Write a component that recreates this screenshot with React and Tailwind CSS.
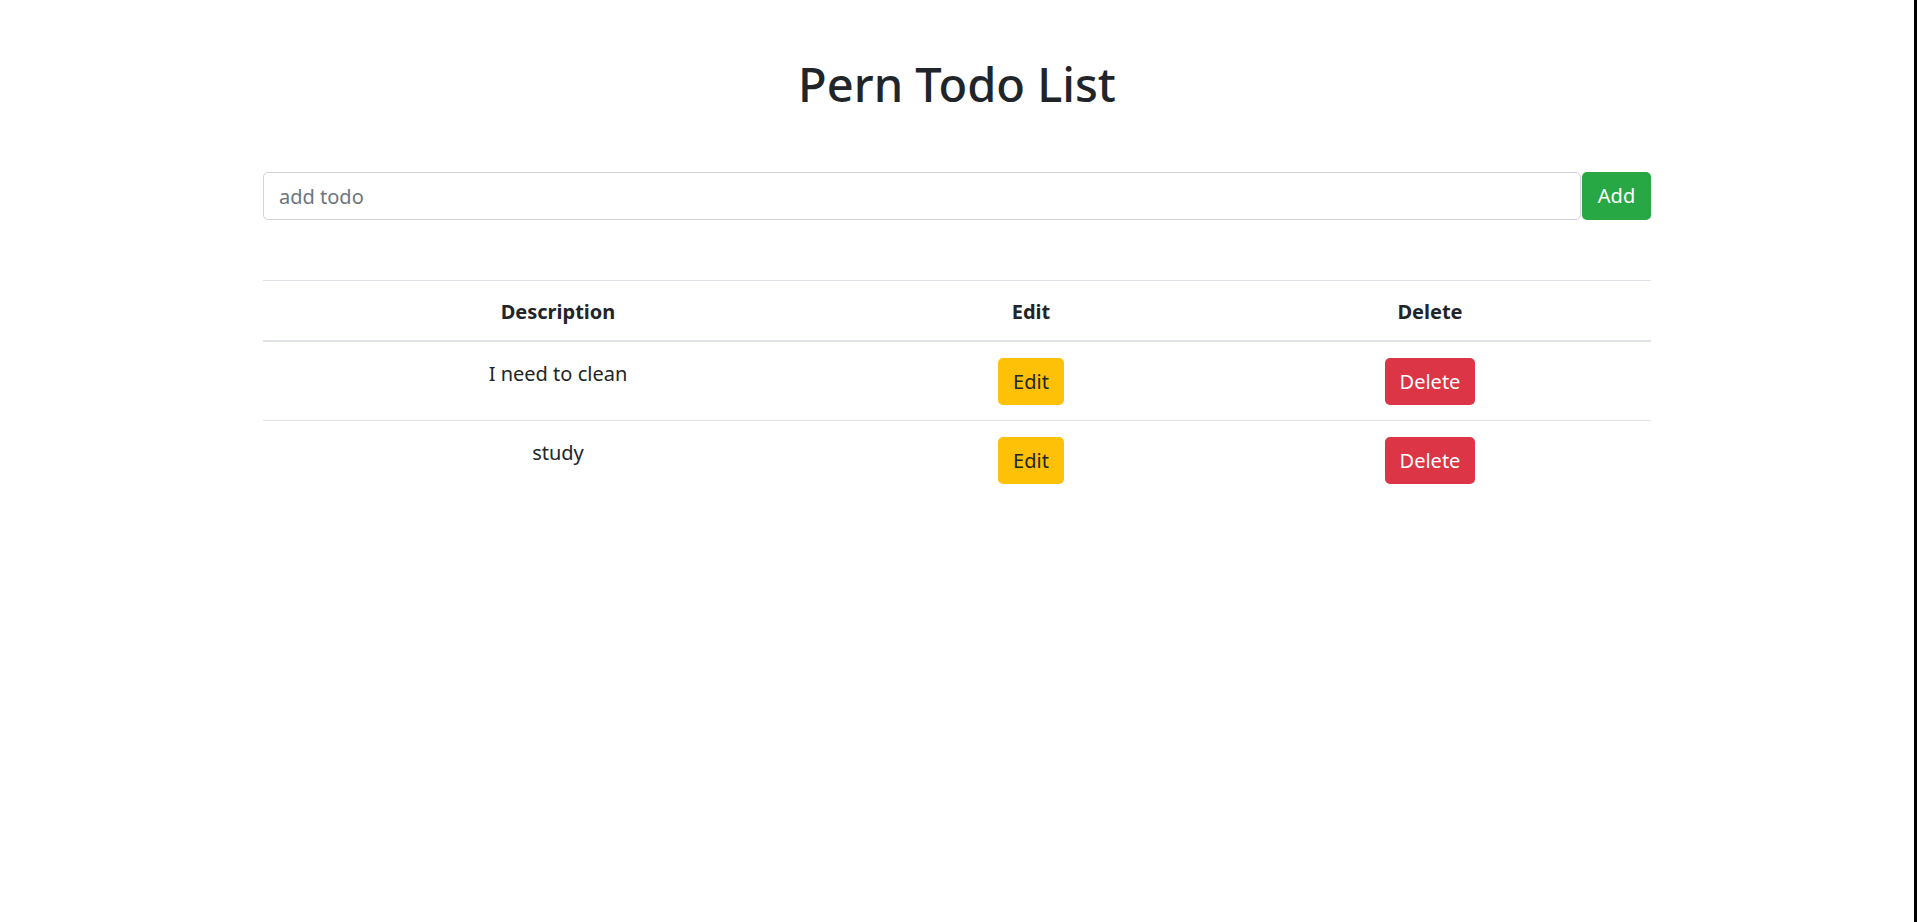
import React from "react";

const todos = [
  { id: 1, description: "I need to clean" },
  { id: 2, description: "study" },
];

export default function App() {
  return (
    <div
      className="flex min-h-screen w-full bg-white text-[#212529]"
      style={{ fontFamily: '"Noto Sans", "Open Sans", sans-serif' }}
    >
      <div className="flex-1">
        <div className="mx-auto w-[1388px]">
          <h1 className="pt-[54px] text-center text-[47px] font-medium leading-[60px] text-[#212529]">
            Pern Todo List
          </h1>
          <form className="mt-[58px] flex" onSubmit={(e) => e.preventDefault()}>
            <input
              type="text"
              placeholder="add todo"
              className="h-[48px] flex-1 rounded-[5px] border border-[#ced4da] bg-white px-[15px] text-[20px] text-[#495057] outline-none placeholder:text-[#6c757d]"
            />
            <button className="ml-px h-[48px] w-[69px] rounded-[5px] bg-[#28a745] text-[20px] text-white">
              Add
            </button>
          </form>
          <table className="mt-[60px] w-full table-fixed border-collapse text-center text-[20px]">
            <colgroup>
              <col className="w-[590px]" />
              <col className="w-[356px]" />
              <col className="w-[442px]" />
            </colgroup>
            <thead>
              <tr>
                <th className="border-t border-b-2 border-[#dee2e6] pt-[16px] pb-[13px] font-bold leading-[30px]">
                  Description
                </th>
                <th className="border-t border-b-2 border-[#dee2e6] pt-[16px] pb-[13px] font-bold leading-[30px]">
                  Edit
                </th>
                <th className="border-t border-b-2 border-[#dee2e6] pt-[16px] pb-[13px] font-bold leading-[30px]">
                  Delete
                </th>
              </tr>
            </thead>
            <tbody>
              {todos.map((t) => (
                <tr key={t.id}>
                  <td className="border-t border-[#dee2e6] px-[15px] pt-[17px] pb-[15px] align-top leading-[30px]">
                    {t.description}
                  </td>
                  <td className="border-t border-[#dee2e6] px-[15px] pt-[16px] pb-[15px] align-top">
                    <button className="h-[47px] rounded-[5px] bg-[#ffc107] px-[15px] text-[20px] leading-[30px] text-[#212529]">
                      Edit
                    </button>
                  </td>
                  <td className="border-t border-[#dee2e6] px-[15px] pt-[16px] pb-[15px] align-top">
                    <button className="h-[47px] rounded-[5px] bg-[#dc3545] px-[15px] text-[20px] leading-[30px] text-white">
                      Delete
                    </button>
                  </td>
                </tr>
              ))}
            </tbody>
          </table>
        </div>
      </div>
      <div className="w-[3px] shrink-0 bg-black" />
    </div>
  );
}
